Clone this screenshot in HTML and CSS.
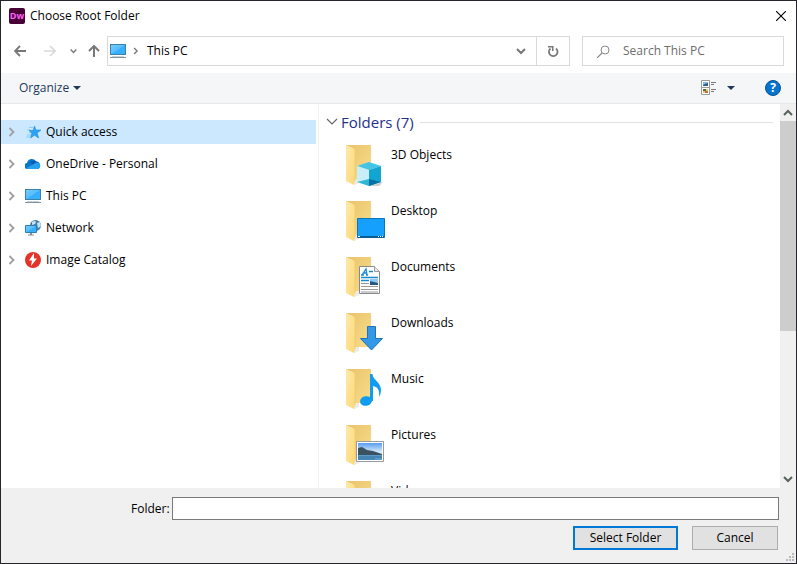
FILE: index.html
```html
<!DOCTYPE html>
<html lang="en">
<head>
<meta charset="utf-8">
<title>Choose Root Folder</title>
<link rel="stylesheet" href="styles.css">
</head>
<body>
<svg class="defs" aria-hidden="true">
  <defs>
    <linearGradient id="screen" x1="0" y1="0" x2="1" y2="1"><stop offset="0" stop-color="#7accff"/><stop offset=".5" stop-color="#55bdff"/><stop offset=".52" stop-color="#36aeff"/><stop offset="1" stop-color="#35b2f8"/></linearGradient>
    <linearGradient id="flap" x1="0" y1="0" x2="1" y2="1"><stop offset="0" stop-color="#ffe9a8"/><stop offset="1" stop-color="#fbd978"/></linearGradient>
    <linearGradient id="back" x1="0" y1="0" x2="1" y2="1"><stop offset="0" stop-color="#e9c46a"/><stop offset="1" stop-color="#f8dc8c"/></linearGradient>
    <linearGradient id="sky" x1="0" y1="0" x2="0" y2="1"><stop offset="0" stop-color="#5a9bf0"/><stop offset=".5" stop-color="#cfe6fb"/><stop offset="1" stop-color="#fff"/></linearGradient>
    <symbol id="pc" viewBox="0 0 16 16">
      <rect x=".5" y="1.5" width="15" height="10" fill="url(#screen)" stroke="#3f80a8"/>
      <path d="M2 14h12v-1H2z" fill="#c9d3da"/><path d="M0 14h16v1H0z" fill="#7f929f"/>
    </symbol>
    <symbol id="chev" viewBox="0 0 8 10"><path d="M1.5 1l4 4-4 4" fill="none" stroke="currentColor" stroke-width="1.8"/></symbol>
    <symbol id="down" viewBox="0 0 10 8"><path d="M1 2l4 4 4-4" fill="none" stroke="currentColor" stroke-width="2"/></symbol>
    <symbol id="tri" viewBox="0 0 8 4"><path d="M0 0h8L4 4z" fill="currentColor"/></symbol>
    <symbol id="folder" viewBox="0 0 44 44">
      <path d="M8 41l5-2V34H8z" fill="#ddd" opacity=".6"/>
      <path d="M0 1h25v34H8z" fill="url(#back)"/>
      <path d="M0 1l7 3 2 2v31l-1 4-8-4z" fill="url(#flap)"/>
      <path d="M9 6v31" stroke="#f2cc70" fill="none"/>
    </symbol>
  </defs>
</svg>
<main class="dialog">
  <header class="title">
    <svg class="i16" viewBox="0 0 16 16"><rect width="16" height="16" rx="2" fill="#470137"/><text class="dw" x="8" y="11" text-anchor="middle">Dw</text></svg>
    <h1>Choose Root Folder</h1>
    <button class="close" aria-label="Close"><svg viewBox="0 0 10 10" width="10" height="10"><path d="M0 0l10 10M10 0L0 10" stroke="#000" stroke-width="1.1"/></svg></button>
  </header>
  <nav class="nav">
    <button class="back" aria-label="Back"><svg viewBox="0 0 12 12" width="12" height="12"><path d="M12 6H1M6 1L1 6l5 5" fill="none" stroke="#777" stroke-width="1.8"/></svg></button>
    <button class="fwd" aria-label="Forward"><svg viewBox="0 0 12 12" width="12" height="12"><path d="M0 6h11M6 1l5 5-5 5" fill="none" stroke="#d9d9d9" stroke-width="1.6"/></svg></button>
    <button class="recent" aria-label="Recent locations"><svg width="7" height="6"><use href="#down"/></svg></button>
    <button class="up" aria-label="Up"><svg viewBox="0 0 12 12" width="12" height="12"><path d="M6 12V1M1 6l5-5 5 5" fill="none" stroke="#777" stroke-width="2"/></svg></button>
    <div class="address">
      <svg class="i16"><use href="#pc"/></svg>
      <svg class="crumb" width="6" height="8"><use href="#chev"/></svg>
      <span>This PC</span>
      <button class="drop" aria-label="Previous locations"><svg width="10" height="8"><use href="#down"/></svg></button>
      <button class="refresh" aria-label="Refresh"><svg viewBox="0 0 12 12" width="12" height="12"><path d="M9 3.500A4.300 4.300 0 1 1 3.500 3.500" fill="none" stroke="#777" stroke-width="1.800"/><path d="M1 1h5.500v5H5V2.600H1z" fill="#777"/></svg></button>
    </div>
    <label class="search">
      <svg viewBox="0 0 13 13" width="13" height="13"><circle cx="8" cy="5" r="4" fill="none" stroke="#888"/><path d="M5 8l-5 5" stroke="#888" stroke-width="1.2"/></svg>
      <input type="text" placeholder="Search This PC" aria-label="Search This PC">
    </label>
  </nav>
  <div class="tools">
    <button class="organize">Organize <svg width="8" height="4"><use href="#tri"/></svg></button>
    <button class="view" aria-label="Change your view">
      <svg viewBox="0 0 16 16" width="16" height="16"><path d="M.5.5h8v14h-8zM.5 7.5h8" fill="#fff" stroke="#999"/><path d="M2 2h5v4H2z" fill="#7db8ef"/><path d="M2 5l2-1 3-1v3H2z" fill="#315b83"/><path d="M2 9h5v4H2z" fill="#edc36d"/><path d="M2 9h3v2H2z" fill="#4b6e50"/><path d="M4 11h3v2H4z" fill="#ba713d"/><path d="M10 2.5h5M10 4.5h3M10 9.500h5M10 11.500h3" stroke="#777"/></svg>
      <svg width="8" height="4"><use href="#tri"/></svg>
    </button>
    <button class="help" aria-label="Help">?</button>
  </div>
  <div class="body">
    <ul class="tree">
      <li><a class="on" href="#"><svg class="exp"><use href="#chev"/></svg><svg class="i16" viewBox="0 0 16 16"><path d="M4 3.500h4M2 6h4M4 8.500h3M2 11h4M1 13h4" stroke="#7cc5f3" stroke-width=".8"/><path d="M9.500 2l1.400 4H16l-3.800 3 1.500 5-4.200-2.700L5.500 14l1.400-5L4 6.500h4z" fill="#2aa4f4" stroke="#1483d2" stroke-width=".5"/></svg>Quick access</a></li>
      <li><a href="#"><svg class="exp"><use href="#chev"/></svg><svg class="i16" viewBox="0 0 16 16"><path d="M3 13a3 3 0 0 1-1-6 5 5 0 0 1 9.300-1.500A4 4 0 0 1 13 13z" fill="#0875cf"/><path d="M5 6.500a5 5 0 0 1 6.300-1A4.500 4.500 0 0 1 13.500 7l-4 2z" fill="#0b5db2"/><path d="M3.500 13a3 3 0 0 1-2-1L9 8a3.700 3.700 0 0 1 4.500-1 3.200 3.200 0 0 1-.5 6z" fill="#27a2ea"/></svg>OneDrive - Personal</a></li>
      <li><a href="#"><svg class="exp"><use href="#chev"/></svg><svg class="i16"><use href="#pc"/></svg>This PC</a></li>
      <li><a href="#"><svg class="exp"><use href="#chev"/></svg><svg class="i16" viewBox="0 0 16 16"><circle cx="10.500" cy="5.500" r="5.500" fill="#4d7fa6"/><path d="M7 2q3-2 4 0l-1 2-3 1zM12 3l3-1 1 4-3 2z" fill="#c4e5f5"/><path d="M.5 5.500h11v7H.5z" fill="url(#screen)" stroke="#2b7eb3"/><path d="M5 13h2v1.500H5zM3 14.500h6v1H3z" fill="#7d919e"/></svg>Network</a></li>
      <li><a href="#"><svg class="exp"><use href="#chev"/></svg><svg class="i16" viewBox="0 0 16 16"><circle cx="8" cy="8" r="8" fill="#e3342b"/><path d="M9 1L4 8.500h3L6 14l6-7.500H9z" fill="#fff"/></svg>Image Catalog</a></li>
    </ul>
    <section class="list">
      <h2><svg viewBox="0 0 12 8" width="12" height="8"><path d="M1 1l5 5 5-5" fill="none" stroke="#666" stroke-width="1.2"/></svg>Folders (7)</h2>
      <ul class="folders">
        <li><svg viewBox="0 0 44 44"><use href="#folder"/><path d="M23 42l14-4-4 4z" fill="#ccc"/><path d="M11 22l12-4 12 4-12 4z" fill="#43c6e5"/><path d="M11 22l12 4v16l-12-4z" fill="#c8eff9"/><path d="M35 22l-12 4v16l12-4z" fill="#12a5d1"/><path d="M23 35l12 3-12 4z" fill="#0671a5"/><path d="M23 35l-12 3 12 4z" fill="#31b6d4"/></svg><span>3D Objects</span></li>
        <li><svg viewBox="0 0 44 44"><use href="#folder"/><path d="M11.500 18.500h27v19h-27z" fill="#16a0fd" stroke="#0b75b8"/><path d="M12 36h26v2H12z" fill="#075d95"/><path d="M12 36.500h2M32 36.500h1M34 36.500h1M36 36.500h1" stroke="#fff"/></svg><span>Desktop</span></li>
        <li><svg viewBox="0 0 44 44"><use href="#folder"/><path d="M13.500 10.500h15l5 5v22h-20z" fill="#fff" stroke="#888"/><path d="M28.500 10.500v5h5" fill="#e9e9e9" stroke="#999"/><path d="M16 19l4-6 1 6m-4-2h4m-6 2h3m2 0h2M23 15.500h4M15 21.500h17M15 24.500h8" fill="none" stroke="#168bd0" stroke-width="1.300"/><path d="M15 27.500h8M15 30.500h17M15 33.500h17M15 36h17" stroke="#999"/><path d="M24 23h8v6h-8z" fill="#91c7ef"/><path d="M24 25l8 2v2h-8z" fill="#245781"/></svg><span>Documents</span></li>
        <li><svg viewBox="0 0 44 44"><use href="#folder"/><path d="M21.500 14.500h8v12h7L25.500 38 14.500 26.500h7z" fill="#3398e8" stroke="#1c72bc"/></svg><span>Downloads</span></li>
        <li><svg viewBox="0 0 44 44"><use href="#folder"/><ellipse cx="20" cy="33" rx="6" ry="4.800" transform="rotate(-12 20 33)" fill="#109cf1"/><path d="M24 6h2.500c0 6 8.500 8 8.500 16q0 4-2 7c1-8-2-10-6-11v15h-3z" fill="#109cf1"/></svg><span>Music</span></li>
        <li><svg viewBox="0 0 44 44"><use href="#folder"/><path d="M10.500 17.500h27v20h-27z" fill="#fff" stroke="#999"/><path d="M12 19h24v17H12z" fill="url(#sky)"/><path d="M12 24l4-1 5 3 6 1 9 3v1H12z" fill="#3b5361"/><path d="M12 31h24v5H12z" fill="#5b9cc7"/><path d="M12 33h24M12 35h17" stroke="#316f9f"/></svg><span>Pictures</span></li>
        <li><svg viewBox="0 0 44 44"><use href="#folder"/></svg><span>Videos</span></li>
      </ul>
    </section>
    <div class="scroll" aria-hidden="true">
      <svg class="flip" width="10" height="8"><use href="#down"/></svg>
      <div class="track"><div class="thumb"></div></div>
      <svg width="10" height="8"><use href="#down"/></svg>
    </div>
  </div>
  <footer class="foot">
    <div class="field"><label for="folder-name">Folder:</label><input id="folder-name" type="text"></div>
    <div class="actions"><button class="btn primary">Select Folder</button><button class="btn cancel">Cancel</button></div>
    <svg class="grip" viewBox="0 0 8 8" width="8" height="8"><path d="M6 0h2v2H6zM6 3h2v2H6zM6 6h2v2H6zM3 3h2v2H3zM3 6h2v2H3zM0 6h2v2H0z" fill="#bbb"/></svg>
  </footer>
</main>
</body>
</html>
```
FILE: styles.css
```css
* { box-sizing: border-box; margin: 0; padding: 0; }
body { font: 12px/16px "Segoe UI", "Open Sans", "Noto Sans", sans-serif; color: #000; }
button { font: inherit; color: inherit; background: none; border: 0; display: flex; align-items: center; justify-content: center; }
input { font: inherit; border: 0; outline: 0; background: none; min-width: 0; }
ul { list-style: none; }
svg { flex: none; display: block; }
a { color: inherit; text-decoration: none; }
.defs { position: absolute; width: 0; height: 0; }
.i16 { width: 16px; height: 16px; }

.dialog { height: 100vh; display: flex; flex-direction: column; border: 1px solid #25252b; background: #fff; }
.title { display: flex; align-items: center; flex: none; height: 29px; padding-left: 8px; gap: 5px; }
.title h1 { font-size: 12px; font-weight: 400; flex: 1; }
.dw { font: 700 9px "Open Sans", sans-serif; fill: #ff61f6; }
.close { width: 30px; height: 28px; }

.nav { display: flex; align-items: center; flex: none; height: 43px; padding: 0 12px 1px; }
.nav > button { height: 28px; color: #777; }
.back { width: 14px; }
.fwd { width: 14px; margin-left: 16px; }
.recent { width: 10px; margin-left: 11px; }
.up { width: 14px; margin-left: 9px; }
.address { flex: 1; display: flex; align-items: center; height: 30px; border: 1px solid #d9d9d9; margin: 0 12px 0 6px; padding-left: 2px; }
.crumb { margin: 0 8px 0 7px; color: #777; }
.address span { flex: 1; }
.drop { width: 30px; height: 28px; color: #777; }
.refresh { width: 33px; height: 28px; border-left: 1px solid #d9d9d9; }
.search { display: flex; align-items: center; gap: 13px; width: 202px; height: 30px; border: 1px solid #d9d9d9; padding-left: 14px; }
.search input { flex: 1; }
.search input::placeholder { color: #6d6d6d; opacity: 1; }

.tools { display: flex; align-items: center; flex: none; height: 31px; padding: 0 15px 0 18px; background: #f5f6f7; border-bottom: 1px solid #e8e8e8; color: #1e395b; }
.organize { gap: 4px; margin-right: auto; }
.view { gap: 10px; }
.help { width: 16px; height: 16px; margin-left: 30px; border: 1px solid #084f91; border-radius: 50%; background: #0873cf; color: #fff; font-weight: 700; }

.body { flex: 1; min-height: 0; display: flex; overflow: hidden; }
.tree { width: 40%; padding: 16px 2px 0 0; border-right: 1px solid #f0f0f0; display: flex; flex-direction: column; gap: 8px; }
.tree a { display: flex; align-items: center; height: 24px; padding-left: 7px; }
.tree .on { background: #cce8ff; }
.tree .i16 { margin: 0 5px 0 9px; }
.exp { width: 8px; height: 10px; color: #a0a0a0; }
.list { flex: 1; min-width: 0; overflow: hidden; padding: 8px 7px 0; }
.list h2 { display: flex; align-items: center; gap: 3px; font-size: 15px; line-height: 20px; font-weight: 400; color: #1e3287; }
.list h2::after { content: ""; flex: 1; height: 1px; margin-left: 3px; background: #e2e2e2; }
.folders { padding: 12px 0 0 20px; }
.folders li { display: flex; gap: 1px; height: 56px; }
.folders svg { width: 44px; height: 44px; }
.folders span { padding-top: 3px; }
.scroll { width: 16px; display: flex; flex-direction: column; align-items: center; background: #f0f0f0; color: #56635a; padding: 5px 0; gap: 4px; }
.flip { transform: rotate(180deg); }
.track { flex: 1; width: 100%; }
.thumb { height: 60%; background: #cdcdcd; }

.foot { position: relative; flex: none; background: #f0f0f0; padding: 9px 17px 13px 130px; display: flex; flex-direction: column; gap: 6px; }
.field { display: flex; align-items: center; gap: 2px; }
.field input { flex: 1; height: 23px; border: 1px solid #7a7a7a; background: #fff; padding: 0 4px; }
.actions { display: flex; justify-content: flex-end; gap: 14px; padding-right: 1px; }
.btn { height: 24px; background: #e1e1e1; border: 1px solid #adadad; }
.primary { width: 105px; border: 2px solid #0078d7; }
.cancel { width: 86px; }
.grip { position: absolute; right: 2px; bottom: 2px; }
```
